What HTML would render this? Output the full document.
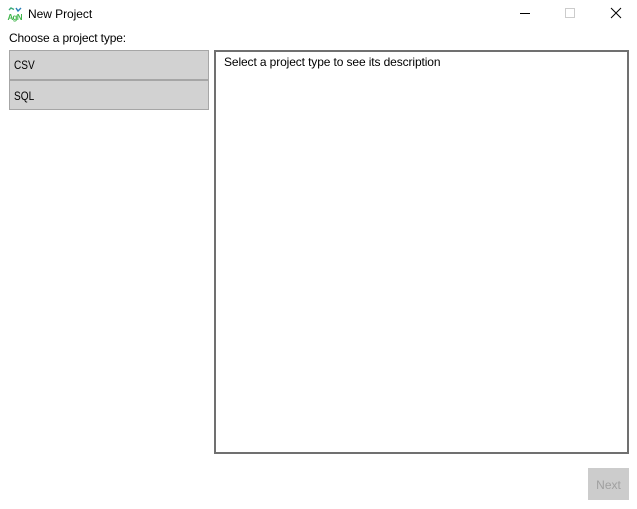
<!DOCTYPE html>
<html><head><meta charset="utf-8"><style>
html,body{margin:0;padding:0;width:637px;height:509px;background:#fff;overflow:hidden}
body{position:relative;font-family:"Liberation Sans",sans-serif;font-size:12px;color:#000}
.a{position:absolute;white-space:nowrap;line-height:16px}
.b{position:absolute;left:9px;width:198px;height:28px;background:#d2d2d2;border:1px solid #a6a6a6}
.s{transform-origin:0 50%;transform:scaleX(.84)}
</style></head><body>
<svg class="a" style="left:7px;top:6px" width="17" height="16" viewBox="0 0 17 16">
<path d="M2 4 L4 2 L7 3.5" fill="none" stroke="#3aa978" stroke-width="1.4"/>
<path d="M9 2 L11 5 L14 2" fill="none" stroke="#2a7fb8" stroke-width="1.4"/>
<text x="0.5" y="14" font-family="Liberation Sans" font-size="8" font-weight="bold" fill="#3fb54a" textLength="15">AgN</text>
</svg>
<div class="a" style="left:28px;top:6px;letter-spacing:-.05px">New Project</div>
<div class="a" style="left:9px;top:30px;letter-spacing:-.14px">Choose a project type:</div>
<svg class="a" style="left:515px;top:0" width="122" height="28">
<path d="M5 13.5H15" stroke="#000" stroke-width="1"/>
<rect x="50.5" y="8.5" width="9" height="9" fill="none" stroke="#ccc"/>
<path d="M96 8L106 18M106 8L96 18" stroke="#000" stroke-width="1" fill="none"/>
</svg>
<div class="b" style="top:50px"></div>
<div class="b" style="top:80px"></div>
<div class="a s" style="left:14px;top:57px">CSV</div>
<div class="a s" style="left:14px;top:88px">SQL</div>
<div class="a" style="left:214px;top:50px;width:411px;height:400px;border:2px solid #707070"></div>
<div class="a" style="left:224px;top:54px;letter-spacing:-.115px">Select a project type to see its description</div>
<div class="a" style="left:588px;top:468px;width:41px;height:32px;background:#cccccc;color:#a0a0a0;text-align:center;line-height:35px">Next</div>
</body></html>
